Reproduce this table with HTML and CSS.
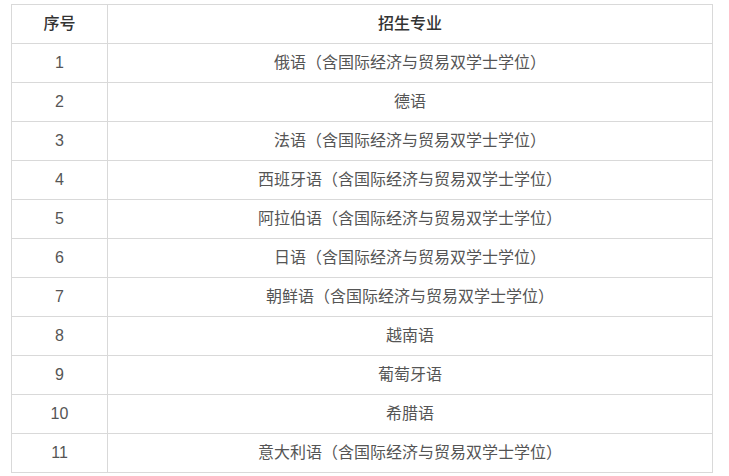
FILE: index.html
```html
<!DOCTYPE html>
<html lang="zh-CN">
<head>
<meta charset="utf-8">
<link rel="stylesheet" href="styles.css">
</head>
<body>
<table class="majors">
  <thead>
    <tr><th class="col-no">序号</th><th>招生专业</th></tr>
  </thead>
  <tbody>
    <tr><td>1</td><td>俄语（含国际经济与贸易双学士学位）</td></tr>
    <tr><td>2</td><td>德语</td></tr>
    <tr><td>3</td><td>法语（含国际经济与贸易双学士学位）</td></tr>
    <tr><td>4</td><td>西班牙语（含国际经济与贸易双学士学位）</td></tr>
    <tr><td>5</td><td>阿拉伯语（含国际经济与贸易双学士学位）</td></tr>
    <tr><td>6</td><td>日语（含国际经济与贸易双学士学位）</td></tr>
    <tr><td>7</td><td>朝鲜语（含国际经济与贸易双学士学位）</td></tr>
    <tr><td>8</td><td>越南语</td></tr>
    <tr><td>9</td><td>葡萄牙语</td></tr>
    <tr><td>10</td><td>希腊语</td></tr>
    <tr><td>11</td><td>意大利语（含国际经济与贸易双学士学位）</td></tr>
  </tbody>
</table>
</body>
</html>
```
FILE: styles.css
```css
html, body {
  margin: 0;
  padding: 0;
  background: #fff;
}
body {
  padding: 4px 0 0 11px;
  font-family: "Liberation Sans", "Noto Sans CJK SC", sans-serif;
  font-size: 16px;
}
.majors {
  border-collapse: collapse;
  width: 702px;
  table-layout: fixed;
}
.majors th,
.majors td {
  border: 1px solid #d9d9d9;
  height: 38px;
  padding: 0;
  text-align: center;
  vertical-align: middle;
  line-height: 20px;
}
.majors th {
  color: #333;
  font-weight: 500;
}
.majors td {
  color: #555;
}
.majors .col-no {
  width: 95px;
}
```
